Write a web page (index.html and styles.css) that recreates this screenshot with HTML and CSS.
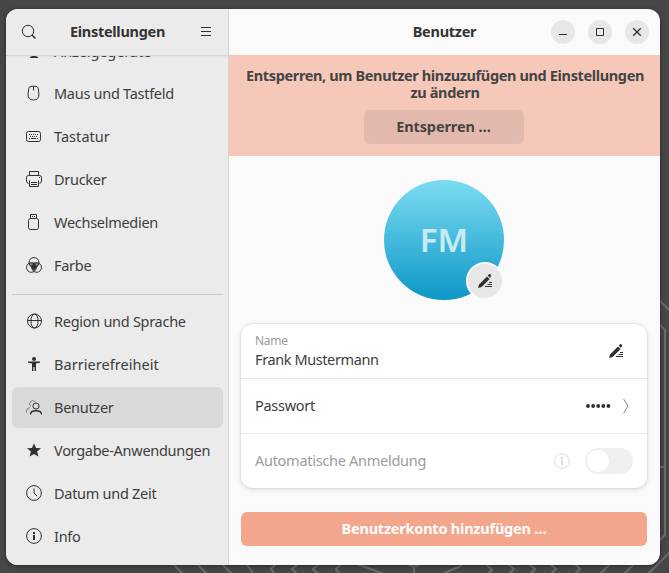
FILE: index.html
```html
<!DOCTYPE html>
<html lang="de">
<head>
<meta charset="utf-8">
<title>Einstellungen</title>
<link rel="stylesheet" href="styles.css">
</head>
<body>
<svg class="wallpaper" viewBox="0 0 669 573" fill="none" stroke="#6c6c6c" stroke-width="2">
  <path d="M173 564l10 10M197 564l10 10M222 564l10 10M247 565l6 8M275 565l-4 4 4 5M297 565l-5 4 5 5M318 565l-5 4 5 5M340 565l-4 4 4 5M357 564l27 10M402 562l12 5 12-5M414 567v7M444 573l17-7v-2M486 564l6 6-4 4M508 564l6 5-5 5M529 564l6 5-5 5M550 564l6 5-5 5M575 564l5 5-5 5M600 574l10-10M624 574l10-10M648 574l22-22M660 301l9 9M660 325l5 5v205l-6 6M660 467h5"/>
</svg>
<div class="window">
  <aside class="sidebar">
    <header class="bar side-bar">
      <svg class="icon" viewBox="0 0 16 16"><circle cx="7" cy="7" r="5.700"/><path d="M11 11l3.500 3.500" stroke-width="1.500"/></svg>
      <h1 class="title">Einstellungen</h1>
      <svg class="icon" viewBox="0 0 16 16"><path d="M3 3.500h10M3 7.500h10M3 11.500h10"/></svg>
    </header>
    <nav class="list">
      <a class="row"><svg class="icon" viewBox="0 0 16 16"><path d="M1.500 2.500h13v8h-13z"/><path class="solid" d="M6.500 11h3v3l2.500 1v1H4v-1l2.500-1z"/></svg><span class="lower">Anzeigegeräte</span></a>
      <a class="row"><svg class="icon" viewBox="0 0 16 16"><path d="M5 1.300h5q2 .2 2.300 2.400l.6 5.300q.3 6-5.400 6t-5.400-6l.6-5.300Q3 1.500 5 1.300zM7.500 1.500v4"/></svg><span>Maus und Tastfeld</span></a>
      <a class="row"><svg class="icon" viewBox="0 0 16 16"><rect x=".5" y="3.500" width="14" height="10" rx="2"/><path d="M3 6.500h10M4 8.500h8" stroke-dasharray="1 1"/><path d="M3 10.500h1M5 10.500h5M11 10.500h1"/></svg><span class="wide">Tastatur</span></a>
      <a class="row"><svg class="icon" viewBox="0 0 16 16"><path d="M3.500 4V.5h9V4M2.500 12.500Q.5 12 .5 10V6.500q0-2 2-2h11q2 0 2 2V10q0 2-2 2.500M3.500 9.500v6h9v-6M5 11.500h6M5 13.500h6"/><path class="solid" d="M13 6h1v1h-1z"/></svg><span>Drucker</span></a>
      <a class="row"><svg class="icon" viewBox="0 0 16 16"><rect x="2.500" y="4.500" width="10" height="11" rx="2"/><path d="M4.500 4V.5h6V4M6 2.500h1M8 2.500h1"/></svg><span>Wechselmedien</span></a>
      <a class="row"><svg class="icon" viewBox="0 0 16 16"><circle cx="8" cy="5.500" r="5"/><circle cx="5.300" cy="10.500" r="4.800"/><circle cx="10.700" cy="10.500" r="4.800"/><path class="solid" d="M3 6q5-1.500 10 0l-.5 2.500-2 3L8 14.500l-2.500-3-2-3z" opacity=".6"/><path class="solid" d="M8 6.500l3 4-3 2.500-3-2.500z"/></svg><span>Farbe</span></a>
      <hr class="rule">
      <a class="row"><svg class="icon" viewBox="0 0 16 16"><circle cx="8.500" cy="8" r="7"/><ellipse cx="8.500" cy="8" rx="3.600" ry="7"/><path d="M1.500 7.500h14"/></svg><span>Region und Sprache</span></a>
      <a class="row"><svg class="icon" viewBox="0 0 16 16"><g class="solid"><circle cx="8" cy="3" r="2"/><path d="M2 5.500h12v1.200l-4 .8V15H8.600v-4H7.400v4H6V7.500l-4-.8z"/></g></svg><span class="wide">Barrierefreiheit</span></a>
      <a class="row selected"><svg class="icon" viewBox="0 0 16 16"><path d="M.5 13.500V12q0-3 3.500-3.500M4.600 7.200A3.200 3.200 0 1 1 9 2.500" opacity=".5"/><circle cx="10" cy="7" r="3.100"/><path d="M4.500 15.500c0-5 11-5 11 0" stroke-width="1.300"/></svg><span>Benutzer</span></a>
      <a class="row"><svg class="icon" viewBox="0 0 16 16"><path class="solid" d="M8 1.200l2 4.800 5 .3-3.900 3.300 1.300 5L8 11.900l-4.400 2.700 1.300-5L1 6.300 6 6z"/></svg><span>Vorgabe-Anwendungen</span></a>
      <a class="row"><svg class="icon" viewBox="0 0 16 16"><circle cx="8" cy="8" r="7.400"/><path d="M8 3.500V8l3.200 3.200"/></svg><span>Datum und Zeit</span></a>
      <a class="row"><svg class="icon" viewBox="0 0 16 16"><circle cx="8" cy="8" r="7.400"/><path class="solid" d="M7 4h2v2H7zM7 7h2v5H7z"/></svg><span>Info</span></a>
    </nav>
  </aside>
  <main class="content">
    <header class="bar main-bar">
      <h2 class="title">Benutzer</h2>
      <div class="controls">
        <button class="control" aria-label="Minimieren"><svg class="icon" viewBox="0 0 16 16"><path d="M4 10.500h8"/></svg></button>
        <button class="control" aria-label="Maximieren"><svg class="icon" viewBox="0 0 16 16"><path d="M4.500 4.500h7v7h-7z"/></svg></button>
        <button class="control" aria-label="Schließen"><svg class="icon" viewBox="0 0 16 16"><path d="M4.200 4.200l7.600 7.600M11.800 4.200l-7.600 7.600" stroke-width="1.300"/></svg></button>
      </div>
    </header>
    <section class="banner">
      <p class="message">Entsperren, um Benutzer hinzuzufügen und Einstellungen<br>zu ändern</p>
      <button class="unlock">Entsperren …</button>
    </section>
    <div class="avatar"><span>FM</span>
      <button class="edit-avatar" aria-label="Bild bearbeiten"><svg class="icon" viewBox="0 0 16 16"><path class="solid" d="M1 15l1-3.600 8-8L12.600 6l-8 8zM10.800 2.600L12 1.300q.8-.6 1.600.3.900.9.300 1.600l-1 1.800zM12 9h3v1h-3zM10.500 11H15v1h-4.500zM8 13h7v1H8z"/></svg></button>
    </div>
    <section class="card">
      <div class="field">
        <div class="stack"><span class="caption">Name</span><span class="person">Frank Mustermann</span></div>
        <svg class="icon pencil" viewBox="0 0 16 16"><path class="solid" d="M1 15l1-3.600 8-8L12.600 6l-8 8zM10.800 2.600L12 1.300q.8-.6 1.600.3.900.9.300 1.600l-1 1.800zM12 9h3v1h-3zM10.500 11H15v1h-4.500zM8 13h7v1H8z"/></svg>
      </div>
      <div class="field">
        <span class="grow">Passwort</span>
        <svg class="dots" viewBox="0 0 25 4"><g class="solid"><circle cx="2" cy="2" r="1.900"/><circle cx="7.100" cy="2" r="1.900"/><circle cx="12.200" cy="2" r="1.900"/><circle cx="17.300" cy="2" r="1.900"/><circle cx="22.400" cy="2" r="1.900"/></g></svg>
        <svg class="icon chevron" viewBox="0 0 16 16"><path d="M5.500.8L10 8l-4.500 7.200"/></svg>
      </div>
      <div class="field disabled">
        <span class="grow">Automatische Anmeldung</span>
        <svg class="icon hint" viewBox="0 0 16 16"><circle cx="8" cy="8" r="7.400"/><path class="solid" d="M7 4h2v2H7zM7 7h2v5H7z"/></svg>
        <span class="switch"><span class="knob"></span></span>
      </div>
    </section>
    <button class="add">Benutzerkonto hinzufügen …</button>
  </main>
</div>
</body>
</html>
```
FILE: styles.css
```css
* { box-sizing: border-box; }
body {
  margin: 0;
  width: 669px;
  height: 573px;
  padding: 9px 9px 8px 6px;
  overflow: hidden;
  background: #474747;
  color: #3d3d3d;
  font: 14.5px/18px "Noto Sans", "Open Sans", sans-serif;
  letter-spacing: -.28px;
}
.wallpaper { position: absolute; left: 0; top: 0; width: 669px; height: 573px; }
.window {
  position: relative;
  display: flex;
  width: 654px;
  height: 556px;
  border-radius: 12px;
  overflow: hidden;
  background: #fafafa;
  box-shadow: 0 1px 5px rgba(0, 0, 0, .45);
}
button { border: 0; padding: 0; font: inherit; letter-spacing: inherit; color: inherit; }
span { white-space: nowrap; }
.icon { width: 16px; height: 16px; flex: none; fill: none; stroke: #303030; stroke-width: 1; display: block; }
.solid { fill: #303030; stroke: none; }
.bar { display: flex; align-items: center; height: 46px; flex: none; }
.title { margin: 0; padding-bottom: 2px; font-size: 14.5px; line-height: 20px; font-weight: 700; color: #333; white-space: nowrap; }

.sidebar { display: flex; flex-direction: column; flex: none; width: 223px; background: #ebebeb; border-right: 1px solid #d6d6d6; }
.side-bar { position: relative; justify-content: space-between; padding: 0 14px 0 15px; box-shadow: 0 1px 0 #d5d5d5, 0 2px 2px rgba(0, 0, 0, .05); }
.list { flex: 1; min-height: 0; overflow: hidden; padding: 0 5px 0 6px; }
.row { display: flex; align-items: center; gap: 12px; height: 41px; margin-bottom: 2px; padding: 0 14px; border-radius: 6px; }
.row:first-child { margin-top: -25px; }
.row .icon { margin-bottom: 1px; }
.row span { padding-bottom: 2px; }
.row .lower { padding-bottom: 0; letter-spacing: -.1px; }
.row .wide { letter-spacing: .04px; }
.selected { background: #d9d9d9; }
.rule { height: 1px; margin: 8px 0 6px; border: 0; background: #cbcbcb; }

.content { display: flex; flex-direction: column; flex: 1; min-width: 0; }
.main-bar { display: grid; grid-template-columns: 1fr auto 1fr; padding: 0 11px; }
.main-bar .title { grid-column: 2; }
.controls { display: flex; justify-content: flex-end; gap: 13px; }
.control { display: grid; place-items: center; width: 24px; height: 24px; border-radius: 50%; background: #e7e7e7; }
.banner { display: flex; flex-direction: column; align-items: center; gap: 9px; height: 101px; padding: 12px 1px 0 0; background: #f6c8b9; }
.message { margin: 0; padding-left: 2px; font-weight: 700; line-height: 17px; letter-spacing: -.36px; text-align: center; white-space: nowrap; color: #444; }
.unlock { width: 160px; height: 34px; padding: 0 1px 2px 0; border-radius: 6px; background: #e4b9ad; font-weight: 700; letter-spacing: -.1px; color: #444; }
.avatar {
  position: relative;
  display: grid;
  place-items: center;
  width: 120px;
  height: 120px;
  margin: 24px 0 24px 155px;
  border-radius: 50%;
  background: linear-gradient(#7bdcf1, #0e97c7);
  color: #c9eaf4;
  font-size: 33px;
  line-height: 40px;
  font-weight: 600;
  letter-spacing: 0;
}
.edit-avatar { position: absolute; left: 82px; top: 82px; display: grid; place-items: center; width: 38px; height: 38px; border: 2px solid #fafafa; border-radius: 50%; background: #e7e7e7; }
.card { width: 406px; margin-left: 12px; border-radius: 12px; background: #fff; box-shadow: 0 0 0 1px rgba(0, 0, 0, .035), 0 1px 4px 1px rgba(0, 0, 0, .1); }
.field { display: flex; align-items: center; height: 55px; padding: 0 14px; border-bottom: 1px solid #e9e9e9; }
.field:last-child { height: 54px; border: 0; }
.stack { display: flex; flex-direction: column; flex: 1; padding-bottom: 2px; }
.grow { flex: 1; padding-bottom: 2px; }
.caption { color: #989898; font-size: 12px; }
.person { letter-spacing: -.4px; }
.pencil { margin-right: 9px; }
.dots { width: 25px; height: 4px; margin-right: 7px; }
.chevron { margin-right: -1px; stroke: #858585; }
.disabled { color: #9c9c9c; }
.hint { margin-right: 15px; stroke: #dcdcdc; }
.hint .solid { fill: #dcdcdc; }
.switch { width: 48px; height: 26px; padding: 2px; border-radius: 13px; background: #efefef; }
.knob { display: block; width: 22px; height: 22px; border-radius: 50%; background: #fff; }
.add { width: 406px; height: 34px; margin: 24px 0 0 12px; padding-bottom: 2px; border-radius: 6px; background: #f4a68c; color: #fff; font-weight: 700; letter-spacing: -.22px; }
```
